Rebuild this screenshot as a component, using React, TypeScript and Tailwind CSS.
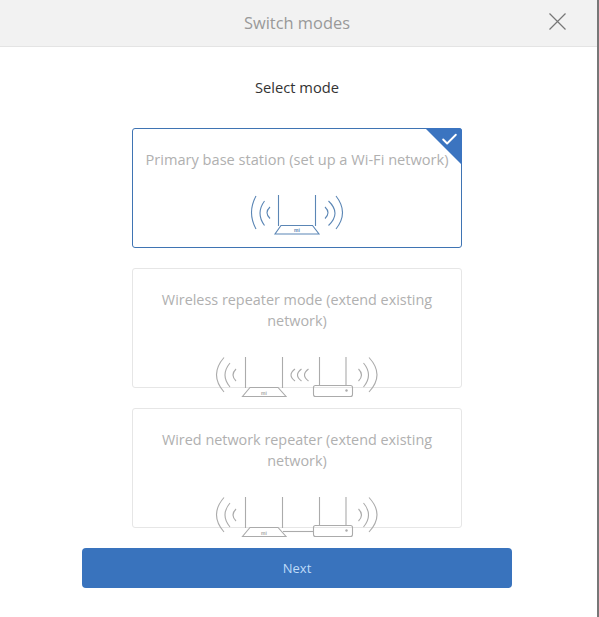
import React from "react";
import { Check } from "lucide-react";

const font = { sans: "font-['Open_Sans','Liberation_Sans',sans-serif]" };

// one wifi wave: start x, top y, apex x, bottom y
function wave(x: number, y1: number, apex: number, y2: number) {
  return `M${x} ${y1}Q${2 * apex - x} ${(y1 + y2) / 2} ${x} ${y2}`;
}

function PrimaryIcon({ color }: { color: string }) {
  return (
    <svg width="96" height="44" viewBox="250 194 96 44" fill="none" stroke={color} strokeWidth="1.1">
      <path d={wave(257, 197, 252.5, 230)} />
      <path d={wave(265.5, 202, 261, 226.5)} />
      <path d={wave(271, 208, 268, 219.5)} />
      <path d={wave(337, 197, 343.5, 230)} />
      <path d={wave(329.5, 202, 336, 226.5)} />
      <path d={wave(326, 208, 329, 219.5)} />
      <path d="M279.5 196V227M316.5 196V227" />
      <path d="M282 226.5H313.5L320 235H276Z" />
      <text x="298" y="232.7" fontSize="5" fontWeight="700" textAnchor="middle" stroke="none" fill={color} fontFamily="Liberation Sans, sans-serif">mi</text>
    </svg>
  );
}

function RepeaterIcon({ wired }: { wired?: boolean }) {
  const color = "#ababab";
  return (
    <svg width="166" height="46" viewBox="214 354 166 46" fill="none" stroke={color} strokeWidth="1.1">
      <path d={wave(224, 357.5, 216.5, 392)} />
      <path d={wave(230, 363, 225, 387)} />
      <path d={wave(236, 369, 233, 381)} />
      <path d={wave(369, 357.5, 377, 392)} />
      <path d={wave(363.5, 363, 368.5, 387)} />
      <path d={wave(358.5, 369, 361.5, 381)} />
      <path d="M245.5 357V388M282.5 357V388" />
      <path d="M250 387.5H278L286 396.5H242.5Z" />
      <text x="264" y="394.7" fontSize="5" fontWeight="700" textAnchor="middle" stroke="none" fill={color} fontFamily="Liberation Sans, sans-serif">mi</text>
      <path d="M319.5 357V385.5M346 357V385.5" />
      <rect x="313.5" y="385.5" width="39" height="11" rx="2" />
      <circle cx="346.5" cy="390.5" r="1.2" fill={color} stroke="none" />
      {wired ? (
        <path d="M283 391.5H313.5" />
      ) : (
        <>
          <path d={wave(295, 369, 291, 381)} />
          <path d={wave(301.5, 369, 297.5, 381)} />
          <path d={wave(308.5, 369, 304.5, 381)} />
        </>
      )}
    </svg>
  );
}

function ModeCard({ title, icon, active }: { title: string; icon: React.ReactNode; active?: boolean }) {
  return (
    <div
      className={`relative flex h-[120px] w-[330px] flex-col items-center rounded-[3px] border bg-white pt-[20px] ${
        active ? "border-[#3f74b3]" : "border-[#e6e6e6]"
      }`}
    >
      <p className={`w-[320px] text-center leading-[21px] text-[#b0b0b0] ${active ? "text-[14.6px]" : "text-[14.4px]"}`}>{title}</p>
      <div className={`mt-auto flex justify-center ${active ? "mb-[10px]" : "-mb-[13px]"}`}>{icon}</div>
      {active && (
        <div className="absolute -right-px -top-px h-[37px] w-[37px] overflow-hidden rounded-tr-[3px]">
          <div className="h-full w-full bg-[#3b74c0] [clip-path:polygon(0_0,100%_0,100%_100%)]" />
          <Check className="absolute right-[3px] top-[2px] text-white" size={19} strokeWidth={2.4} />
        </div>
      )}
    </div>
  );
}

export default function App() {
  return (
    <div className={`flex h-[617px] w-[599px] flex-col overflow-hidden border-r-2 border-[#777] bg-white ${font.sans}`}>
      <header className="relative flex h-[47px] shrink-0 items-center justify-center border-b border-[#e4e4e4] bg-[#f2f2f2] pr-[3px]">
        <h1 className="text-[16.4px] font-normal text-[#999]">Switch modes</h1>
        <button className="absolute right-[30px] top-[12px] text-[#777]">
          <svg width="19" height="19" viewBox="0 0 19 19" stroke="currentColor" strokeWidth="1.2" fill="none">
            <path d="M1.5 1.5L17.5 17.5M17.5 1.5L1.5 17.5" />
          </svg>
        </button>
      </header>
      <div className="flex w-[594px] flex-col items-center">
        <p className="mt-[30px] text-[14.7px] leading-[20px] text-[#333]">Select mode</p>
        <div className="mt-[31px] flex flex-col gap-[20px]">
          <ModeCard active title="Primary base station (set up a Wi-Fi network)" icon={<PrimaryIcon color="#5b86b5" />} />
          <ModeCard title="Wireless repeater mode (extend existing network)" icon={<RepeaterIcon />} />
          <ModeCard title="Wired network repeater (extend existing network)" icon={<RepeaterIcon wired />} />
        </div>
        <button className="mt-[20px] h-[40px] w-[430px] rounded-[4px] bg-[#3973bd] pt-[2px] text-[13px] text-[#bfdbf9]">Next</button>
      </div>
    </div>
  );
}
